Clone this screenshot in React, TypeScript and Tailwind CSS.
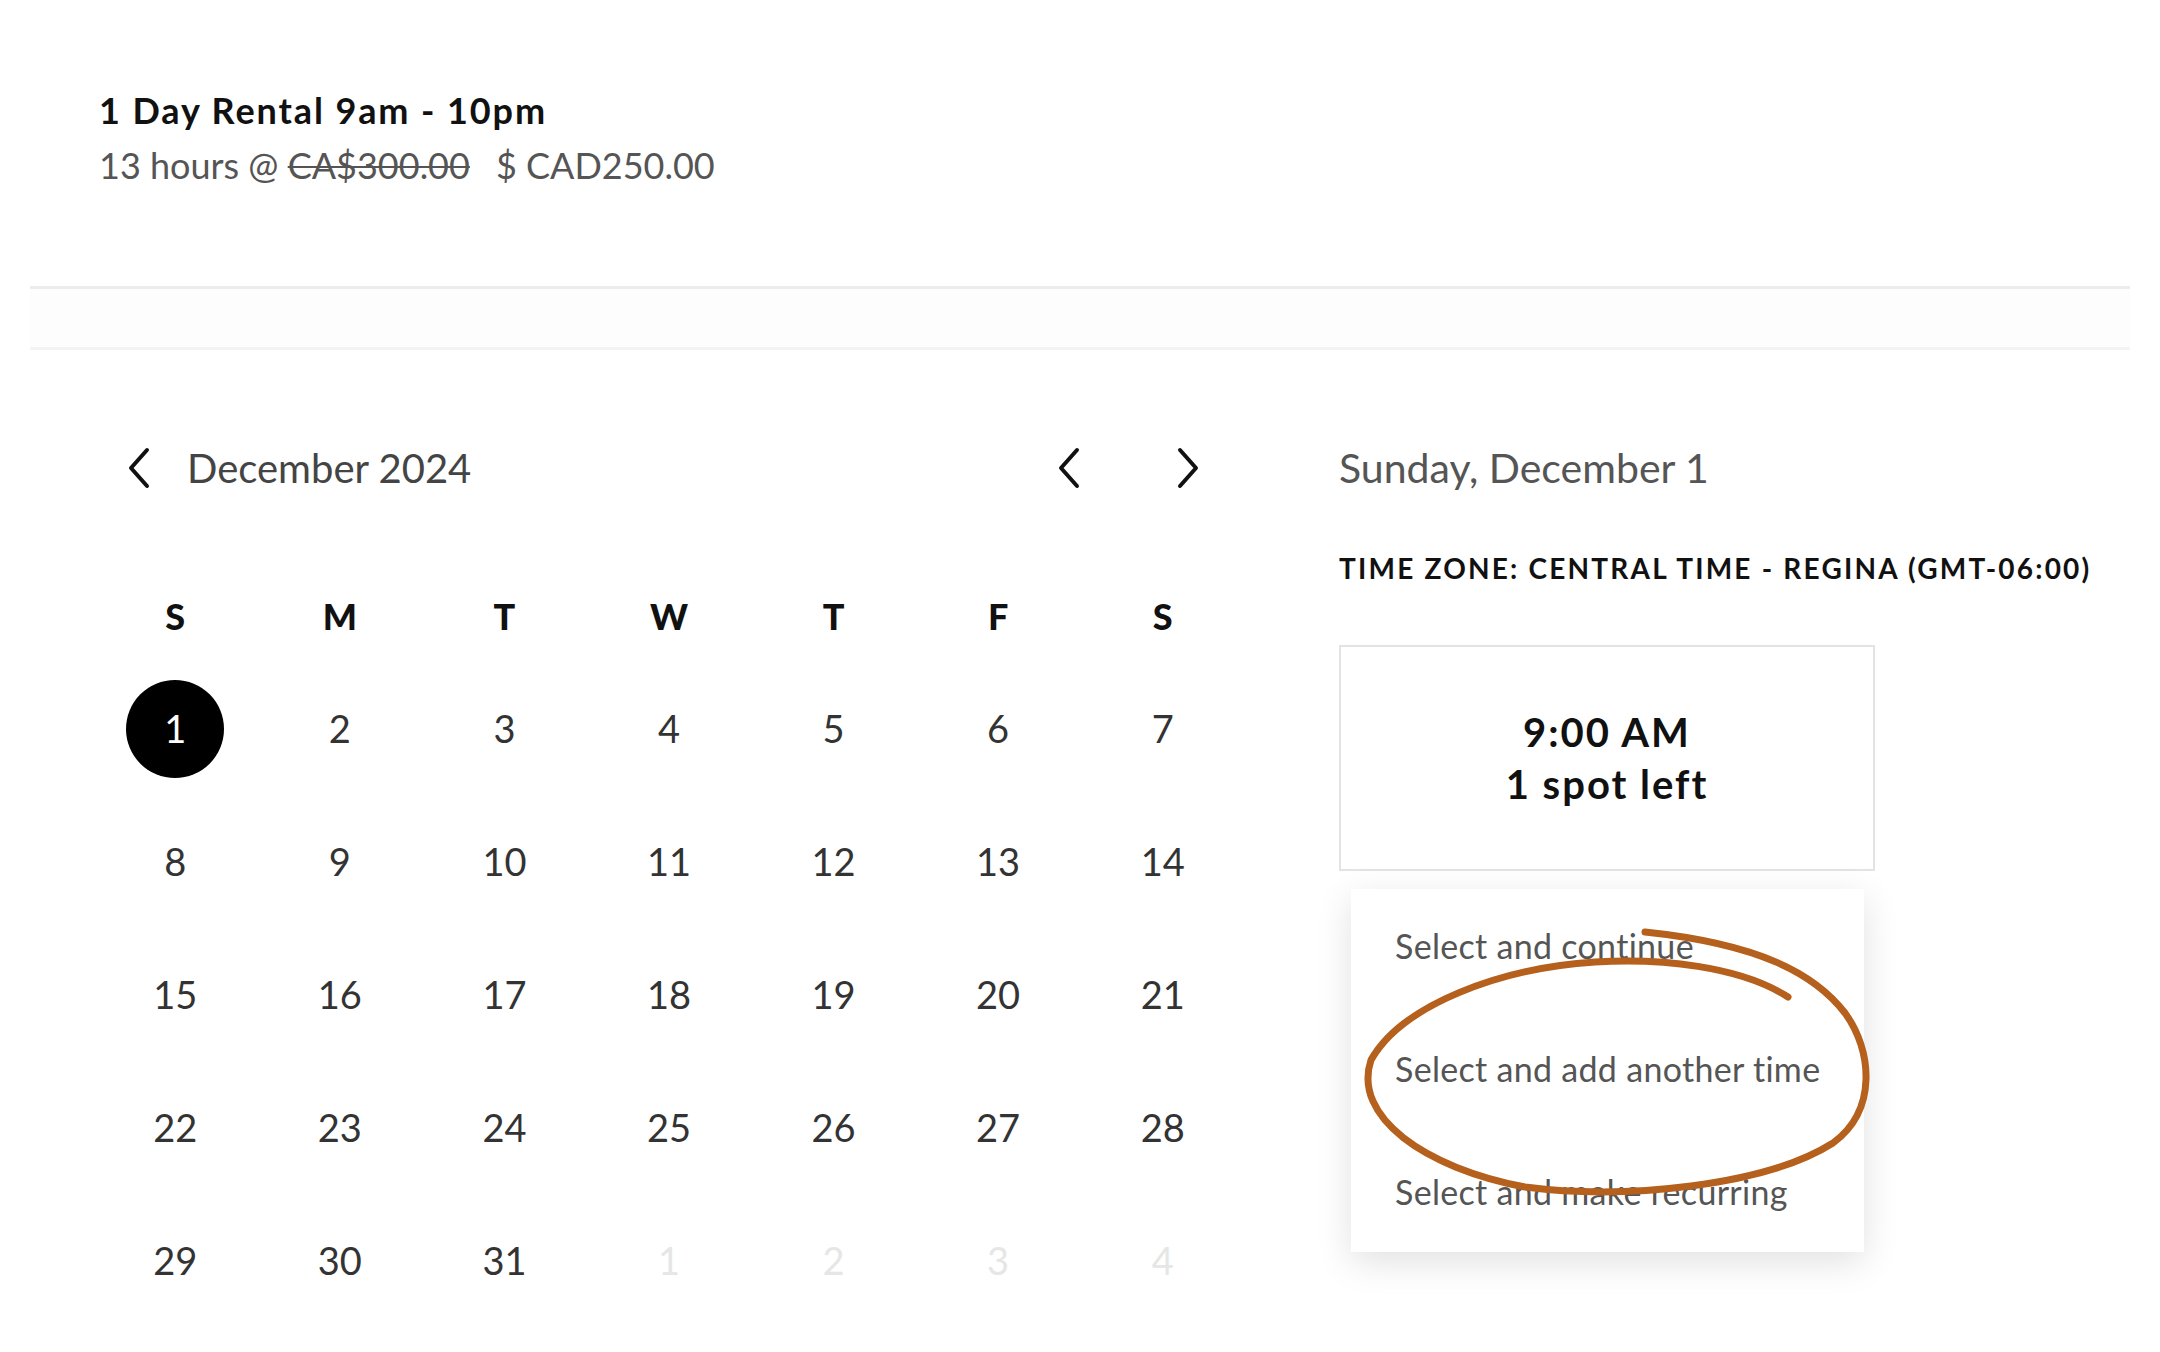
import React from "react";

const Chevron = ({ dir }: { dir: "left" | "right" }) => (
  <svg width="26" height="42" viewBox="0 0 26 42" className="shrink-0">
    <polyline
      points={dir === "left" ? "21,3 5,21 21,39" : "5,3 21,21 5,39"}
      fill="none"
      stroke="#111"
      strokeWidth="4"
      strokeLinecap="round"
      strokeLinejoin="round"
    />
  </svg>
);

const weekdays = ["S", "M", "T", "W", "T", "F", "S"];

const weeks: { day: number; muted?: boolean }[][] = [
  [1, 2, 3, 4, 5, 6, 7].map((d) => ({ day: d })),
  [8, 9, 10, 11, 12, 13, 14].map((d) => ({ day: d })),
  [15, 16, 17, 18, 19, 20, 21].map((d) => ({ day: d })),
  [22, 23, 24, 25, 26, 27, 28].map((d) => ({ day: d })),
  [
    { day: 29 },
    { day: 30 },
    { day: 31 },
    { day: 1, muted: true },
    { day: 2, muted: true },
    { day: 3, muted: true },
    { day: 4, muted: true },
  ],
];

const App = () => {
  return (
    <div className="relative w-[2160px] h-[1352px] overflow-hidden bg-white font-['Lato',sans-serif]">
      {/* service summary */}
      <div className="pl-[99px] pt-[88px]">
        <div className="text-[36px] font-bold leading-[44px] tracking-[1.9px] text-[#111]">
          1 Day Rental 9am - 10pm
        </div>
        <div className="mt-[11px] text-[36px] leading-[44px] text-[#555]">
          13 hours @ <span className="line-through decoration-2">CA$300.00</span>
          <span className="ml-[26px]">$ CAD250.00</span>
        </div>
      </div>

      <div className="mx-[30px] mt-[99px] h-[3px] bg-[#ececec]" />
      <div className="mx-[30px] h-[58px] bg-[#fdfdfd]" />
      <div className="mx-[30px] h-[3px] bg-[#f4f4f4]" />

      <div className="flex pt-[88px]">
        {/* calendar */}
        <div className="ml-[93px] w-[1152px]">
          <div className="flex h-[60px] items-center pl-[33px] pr-[44px]">
            <Chevron dir="left" />
            <span className="ml-[35px] text-[40px] text-[#444]">December 2024</span>
            <div className="ml-auto flex items-center gap-[93px]">
              <Chevron dir="left" />
              <Chevron dir="right" />
            </div>
          </div>

          <div className="mt-[72px] grid h-[92px] grid-cols-7 items-center">
            {weekdays.map((w, i) => (
              <div key={i} className="text-center text-[36px] font-black text-[#111]">
                {w}
              </div>
            ))}
          </div>

          {weeks.map((week, r) => (
            <div key={r} className="grid h-[133px] grid-cols-7 items-center">
              {week.map((c, i) => (
                <div key={i} className="flex justify-center">
                  {r === 0 && i === 0 ? (
                    <div className="flex h-[98px] w-[98px] items-center justify-center rounded-full bg-black text-[38px] text-white">
                      {c.day}
                    </div>
                  ) : (
                    <span
                      className={
                        c.muted
                          ? "text-[38px] text-[#e6e6e6]"
                          : "text-[38px] text-[#333]"
                      }
                    >
                      {c.day}
                    </span>
                  )}
                </div>
              ))}
            </div>
          ))}
        </div>

        {/* time slots */}
        <div className="ml-[94px] flex flex-col items-start">
          <div className="h-[60px] text-[41px] leading-[60px] text-[#555]">
            Sunday, December 1
          </div>
          <div className="mt-[50px] h-[40px] whitespace-nowrap text-[28px] font-bold leading-[40px] tracking-[2.2px] text-[#111]">
            TIME ZONE: CENTRAL TIME - REGINA (GMT-06:00)
          </div>
          <div className="mt-[57px] flex h-[226px] w-[536px] flex-col items-center justify-center border-2 border-[#e3e3e3] text-[40px] font-bold leading-[52px] tracking-[2px] text-[#111]">
            <span>9:00 AM</span>
            <span>1 spot left</span>
          </div>
          <div className="ml-[12px] mt-[18px] flex w-[513px] flex-col gap-[85px] bg-white pb-[41px] pl-[44px] pt-[38px] text-[34px] leading-[38px] tracking-[0.3px] text-[#555] shadow-[0_10px_34px_rgba(0,0,0,0.12)]">
            <span>Select and continue</span>
            <span>Select and add another time</span>
            <span>Select and make recurring</span>
          </div>
        </div>
      </div>

      {/* hand-drawn highlight */}
      <svg
        className="pointer-events-none absolute left-0 top-0"
        width="2160"
        height="1352"
        viewBox="0 0 2160 1352"
      >
        <path
          d="M1788 997 C1740 966 1660 958 1595 962 C1500 968 1402 1005 1371 1060 C1352 1117 1425 1168 1525 1187 C1625 1200 1765 1186 1833 1143 C1878 1110 1872 1050 1845 1013 C1815 974 1760 944 1645 932"
          fill="none"
          stroke="#b5601c"
          strokeWidth="7"
          strokeLinecap="round"
        />
      </svg>
    </div>
  );
};

export default App;
